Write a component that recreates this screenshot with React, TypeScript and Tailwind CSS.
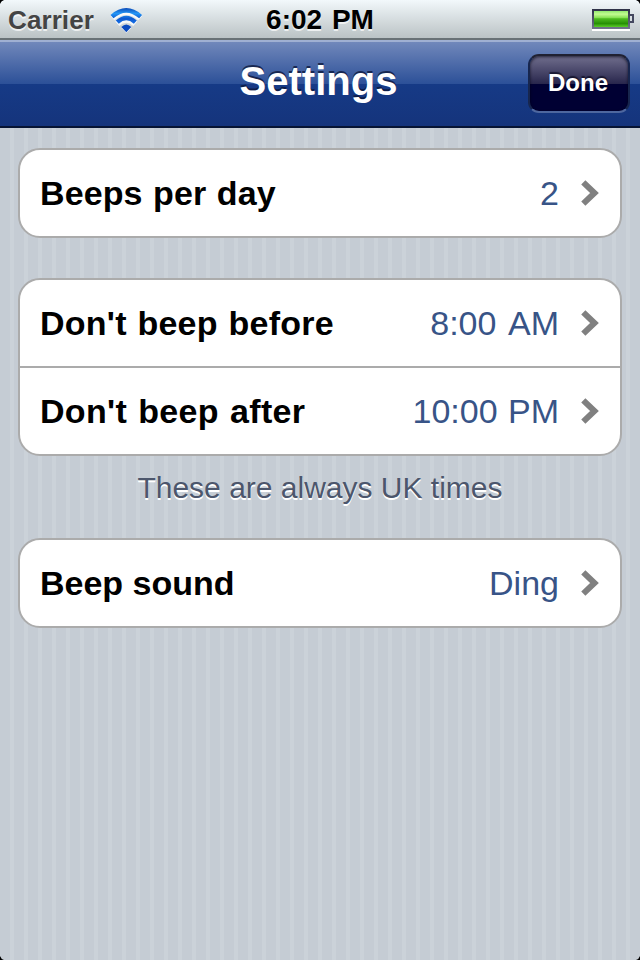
import type { ReactNode } from "react";

function Chevron() {
  return (
    <svg className="ml-[22px] h-[26px] w-[18px] shrink-0" viewBox="0 0 18 26">
      <path d="M2.3 2.3 L13.5 13 L2.3 23.7" fill="none" stroke="#808080" strokeWidth="6" />
    </svg>
  );
}

function Row({ label, value, labelClass, valueClass }: { label: string; value: string; labelClass: string; valueClass: string }) {
  return (
    <div className="flex h-[86px] items-center pr-[21px] pl-5 text-[34px] leading-[40px] whitespace-nowrap">
      <span className={"font-bold text-black " + labelClass}>{label}</span>
      <span className={"ml-auto text-[#385487] " + valueClass}>{value}</span>
      <Chevron />
    </div>
  );
}

function Group({ children }: { children: ReactNode }) {
  return <div className="mx-[18px] rounded-[22px] border-2 border-[#ababab] bg-white">{children}</div>;
}

function Wifi() {
  return (
    <svg className="ml-[14px] h-[28px] w-[36px]" viewBox="0 0 36 28">
      <defs>
        <linearGradient id="wifi" x1="0" y1="3" x2="0" y2="26" gradientUnits="userSpaceOnUse">
          <stop offset="0" stopColor="#0c50bd" />
          <stop offset="0.22" stopColor="#2496f5" />
          <stop offset="0.45" stopColor="#0b58cf" />
          <stop offset="0.7" stopColor="#1c78ec" />
          <stop offset="1" stopColor="#0a45b5" />
        </linearGradient>
      </defs>
      <g transform="translate(0.3 -0.6)">
        <g stroke="#fff" strokeOpacity="0.8" fill="none" transform="translate(0 1.5)">
          <path d="M4 11.2 Q18 -1.2 32 11.2" strokeWidth="6" />
          <path d="M9 16.8 Q18 8.5 27 16.8" strokeWidth="6" />
          <path d="M13.5 21 Q18 16.8 22.5 21 L18 25.5Z" fill="#fff" />
        </g>
        <g stroke="url(#wifi)" fill="none">
          <path d="M3.7 11.2 Q18 -1.2 32.3 11.2" strokeWidth="4.5" />
          <path d="M9 16.8 Q18 8.5 27 16.8" strokeWidth="4.3" />
          <path d="M13 21.7 Q18 16.6 23 21.7 L18 26.8Z" fill="#0a4bc0" stroke="none" />
        </g>
      </g>
    </svg>
  );
}

function Battery() {
  return (
    <svg className="mt-px h-[24px] w-[44px]" viewBox="0 0 44 24" shapeRendering="crispEdges">
      <defs>
        <linearGradient id="shell" x1="0" y1="0" x2="0" y2="1">
          <stop offset="0" stopColor="#2d3047" />
          <stop offset="1" stopColor="#71758b" />
        </linearGradient>
        <linearGradient id="charge" x1="0" y1="0" x2="0" y2="1">
          <stop offset="0" stopColor="#92ea6d" />
          <stop offset="0.2" stopColor="#c2fb92" />
          <stop offset="0.43" stopColor="#83df50" />
          <stop offset="0.48" stopColor="#4dbb1f" />
          <stop offset="0.78" stopColor="#279006" />
          <stop offset="1" stopColor="#59cd27" />
        </linearGradient>
      </defs>
      <rect x="0" y="21" width="38" height="1.5" fill="#fff" />
      <rect x="0" y="1" width="38" height="20" rx="1" fill="url(#shell)" />
      <rect x="2" y="3" width="34" height="16" fill="url(#charge)" />
      <path d="M38 7h3v7h-3" fill="none" stroke="#44485f" strokeWidth="2" />
    </svg>
  );
}

export default function App() {
  return (
    <div className="relative h-[960px] w-[640px] overflow-hidden bg-[repeating-linear-gradient(90deg,#c5ccd4_0px,#c5ccd4_10px,#cbd2d9_10px,#cbd2d9_14px)] font-['Liberation_Sans',Arial,sans-serif]">
      <div className="grid h-10 grid-cols-3 items-center border-b-2 border-[#697276] bg-linear-to-b from-[#f2f8fb] to-[#bbc3c5] text-[26px] leading-[38px] font-bold whitespace-nowrap [text-shadow:0_2px_0_rgba(255,255,255,0.7)]">
        <div className="flex items-center pl-2 text-[#444]">
          <span className="pt-px tracking-[0.1px]">Carrier</span>
          <Wifi />
        </div>
        <div className="text-center text-[28px] text-black [word-spacing:2px]">6:02 PM</div>
        <div className="flex justify-end pr-[4px]"><Battery /></div>
      </div>

      <div className="grid h-[88px] grid-cols-[112px_1fr_112px] items-center border-t-2 border-b-2 border-t-[#a0b0d2] border-b-[#071434] bg-[linear-gradient(#7188bb_0%,#2c5098_50%,#163a86_50%,#15347c_100%)]">
        <span />
        <h1 className="pr-[3px] pb-[6px] text-center text-[40px] leading-[46px] font-bold text-white [text-shadow:0_-2px_0_rgba(10,20,55,0.75)]">Settings</h1>
        <button className="mb-[2px] h-[59px] w-[102px] rounded-[11px] border-2 border-t-[#202132] border-r-[#17264e] border-b-[#4e679f] border-l-[#17264e] bg-[linear-gradient(#706e8d_0%,#29274d_50%,#000033_50%,#000033_100%)] pr-[2px] text-[24px] leading-[54px] font-bold text-white shadow-[inset_0_1px_3px_rgba(0,0,15,0.7)] [text-shadow:0_-2px_1px_rgba(0,0,20,0.6)]">Done</button>
      </div>

      <main className="flex flex-col pt-5">
        <Group>
          <Row label="Beeps per day" value="2" labelClass="tracking-[0.1px] [word-spacing:1px]" valueClass="" />
        </Group>
        <div className="h-10" />
        <Group>
          <Row label="Don't beep before" value="8:00 AM" labelClass="tracking-[0.25px] [word-spacing:1px]" valueClass="[word-spacing:4px]" />
          <div className="h-0.5 bg-[#ababab]" />
          <Row label="Don't beep after" value="10:00 PM" labelClass="tracking-[0.3px] [word-spacing:1.5px]" valueClass="[word-spacing:1px]" />
        </Group>
        <p className="flex h-[82px] items-start justify-center pt-[14px] text-[30px] leading-[36px] text-[#4c566c] [text-shadow:0_2px_0_#fff]">These are always UK times</p>
        <Group>
          <Row label="Beep sound" value="Ding" labelClass="" valueClass="" />
        </Group>
      </main>

      <svg className="pointer-events-none absolute inset-0 h-full w-full" viewBox="0 0 640 960" fill="#000">
        <path d="M0 0H4Q1 1 0 4ZM640 0H636Q639 1 640 4ZM0 960V956Q1 959 4 960ZM640 960V956Q639 959 636 960Z" />
      </svg>
    </div>
  );
}
